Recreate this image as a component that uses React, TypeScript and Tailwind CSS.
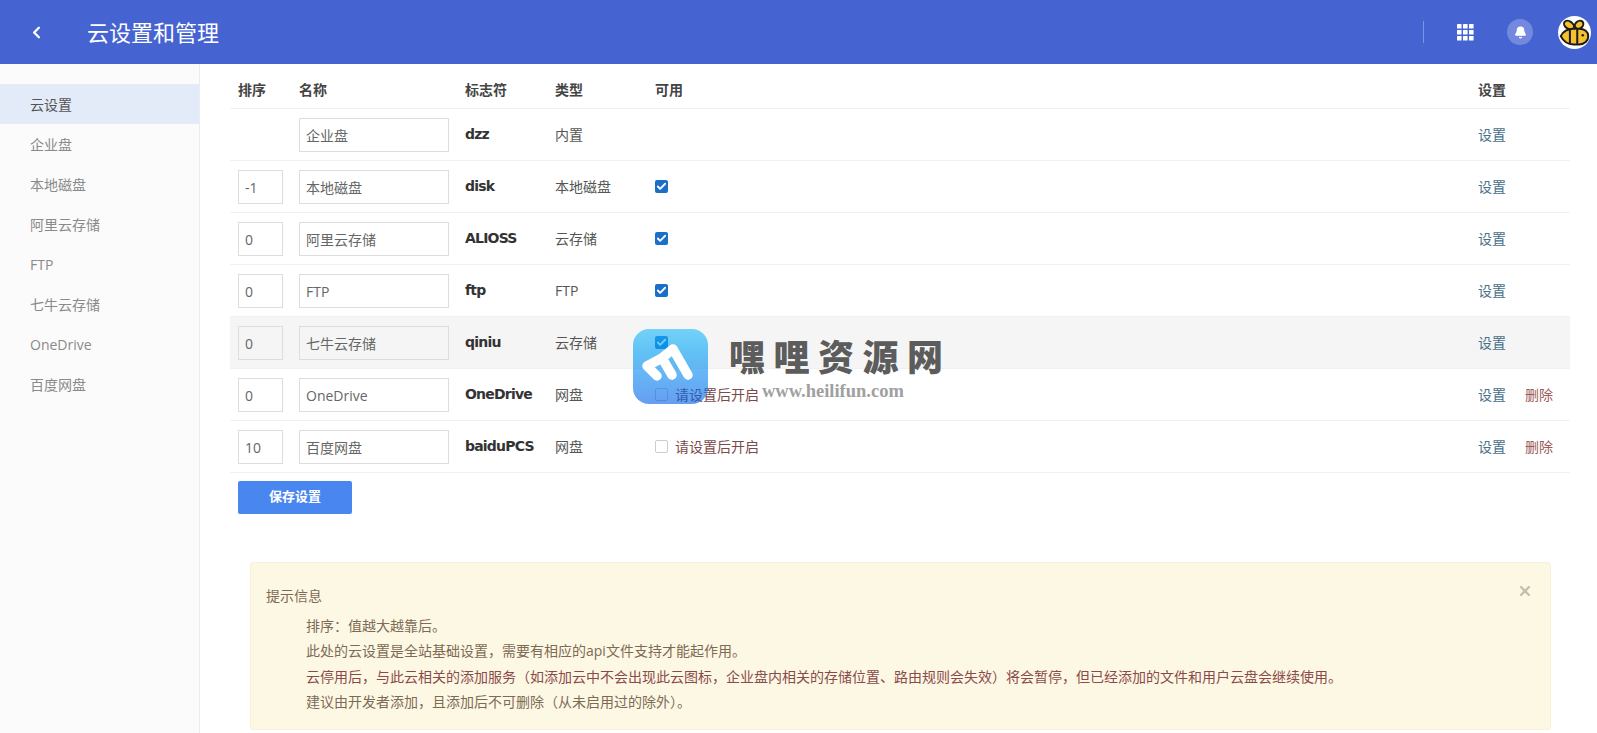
import { Check, ChevronLeft, Bell, X } from "lucide-react"

const menu = ["云设置", "企业盘", "本地磁盘", "阿里云存储", "FTP", "七牛云存储", "OneDrive", "百度网盘"]

type Row = {
  order?: string
  name: string
  id: string
  type: string
  enabled?: boolean
  needSetup?: boolean
  canDelete?: boolean
  hover?: boolean
}

const rows: Row[] = [
  { name: "企业盘", id: "dzz", type: "内置" },
  { order: "-1", name: "本地磁盘", id: "disk", type: "本地磁盘", enabled: true },
  { order: "0", name: "阿里云存储", id: "ALIOSS", type: "云存储", enabled: true },
  { order: "0", name: "FTP", id: "ftp", type: "FTP", enabled: true },
  { order: "0", name: "七牛云存储", id: "qiniu", type: "云存储", enabled: true, hover: true },
  { order: "0", name: "OneDrive", id: "OneDrive", type: "网盘", needSetup: true, canDelete: true },
  { order: "10", name: "百度网盘", id: "baiduPCS", type: "网盘", needSetup: true, canDelete: true },
]

const tips = [
  "排序：值越大越靠后。",
  "此处的云设置是全站基础设置，需要有相应的api文件支持才能起作用。",
  "云停用后，与此云相关的添加服务（如添加云中不会出现此云图标，企业盘内相关的存储位置、路由规则会失效）将会暂停，但已经添加的文件和用户云盘会继续使用。",
  "建议由开发者添加，且添加后不可删除（从未启用过的除外）。",
]

function BeeLogo() {
  return (
    <svg viewBox="0 0 36 36" className="w-[33px] h-[33px]">
      <circle cx="18" cy="18" r="18" fill="#fff" />
      <g stroke="#1c1c1c" strokeWidth="2.2" strokeLinejoin="round">
        <ellipse cx="12" cy="10" rx="6" ry="4" fill="#f5c02e" transform="rotate(35 12 10)" />
        <ellipse cx="23" cy="9.5" rx="5" ry="4" fill="#f5c02e" transform="rotate(-40 23 9.5)" />
        <path d="M3 22c3-6 8-8 14-8h6c6 0 10 3 10 8s-4 9-10 9h-6c-6 0-11-3-14-9z" fill="#f5c02e" />
        <path d="M13 15v15M21 14v17" fill="none" />
      </g>
      <circle cx="27" cy="21" r="1.4" fill="#1c1c1c" />
    </svg>
  )
}

function AppsIcon() {
  return (
    <svg viewBox="0 0 17 17" className="w-[17px] h-[17px]" fill="#fff">
      {[0, 6, 12].map((y) =>
        [0, 6, 12].map((x) => <rect key={`${x}-${y}`} x={x} y={y} width="4.6" height="4.6" rx="0.6" />)
      )}
    </svg>
  )
}

function Header() {
  return (
    <header className="h-16 bg-[#4564d1] flex items-center text-white">
      <ChevronLeft className="ml-[27px] w-[19px] h-[19px]" strokeWidth={3} />
      <h1 className="ml-[41px] text-[22px] font-normal">云设置和管理</h1>
      <div className="ml-auto h-[22px] border-l border-[#7d93e0]" />
      <div className="ml-[33px]">
        <AppsIcon />
      </div>
      <div className="ml-[33px] w-[26px] h-[26px] rounded-full bg-[#7389df] flex items-center justify-center">
        <Bell className="w-[13px] h-[13px]" fill="currentColor" />
      </div>
      <div className="ml-[25px] mr-[6px]">
        <BeeLogo />
      </div>
    </header>
  )
}

function Sidebar() {
  return (
    <aside className="w-[200px] shrink-0 bg-[#fbfbfb] border-r border-[#ececec] pt-5">
      {menu.map((item, i) => (
        <div
          key={item}
          className={`h-10 pl-[30px] flex items-center text-[14px] ${i === 0 ? "bg-[#e3ebf9] text-[#555]" : "text-[#8a8a8a]"}`}
        >
          {item}
        </div>
      ))}
    </aside>
  )
}

function RowItem({ row }: { row: Row }) {
  return (
    <tr className={`h-[52px] border-b border-[#f0f0f0] ${row.hover ? "bg-[#f5f5f5]" : ""}`}>
      <td className="pl-2 pt-[2px]">
        {row.order && (
          <input
            readOnly
            value={row.order}
            className={`block w-[45px] h-[34px] px-[6px] border border-[#ddd] text-[14px] text-[#666] outline-none ${row.hover ? "bg-[#f5f5f5]" : "bg-white"}`}
          />
        )}
      </td>
      <td className="pl-2 pt-[2px]">
        <input
          readOnly
          value={row.name}
          className={`block w-[150px] h-[34px] px-[6px] border border-[#ddd] text-[14px] text-[#666] outline-none ${row.hover ? "bg-[#f5f5f5]" : "bg-white"}`}
        />
      </td>
      <td className="pl-2 text-[14px] font-bold text-[#333] font-['DejaVu_Sans','Noto_Sans_CJK_SC',sans-serif] tracking-[-0.8px]">{row.id}</td>
      <td className="pl-2 text-[14px] text-[#555]">{row.type}</td>
      <td className="pl-2 text-[14px]">
        {row.enabled && (
          <span className="flex w-[13px] h-[13px] items-center justify-center rounded-[2px] bg-[#1a6fc9] text-white">
            <Check className="w-[11px] h-[11px]" strokeWidth={4} />
          </span>
        )}
        {row.needSetup && (
          <span className="flex items-center gap-[7px] text-[#7b4a4a]">
            <span className="w-[13px] h-[13px] rounded-[2px] border border-[#ccc] bg-white" />
            请设置后开启
          </span>
        )}
      </td>
      <td className="pl-2 text-[14px]">
        <a className="text-[#46708a]">设置</a>
        {row.canDelete && <a className="ml-[19px] text-[#9c5a5a]">删除</a>}
      </td>
    </tr>
  )
}

function Watermark() {
  return (
    <div className="absolute left-[633px] top-[329px] flex pointer-events-none">
      <div className="w-[75px] h-[75px] rounded-[16px] bg-gradient-to-b from-[#1bbbfa]/60 to-[#005ce6]/60">
        <svg viewBox="0 0 75 75" className="w-[75px] h-[75px]">
          <path d="M24 47 L14 37 L29 29 L39 46 M29 29 L40 20 L55 46" fill="none" stroke="#fff" strokeWidth="9.5" strokeLinecap="round" strokeLinejoin="round" />
        </svg>
      </div>
      <div className="ml-[21px] pt-[9px]">
        <div className="text-[36px] leading-[40px] font-black tracking-[8.5px] text-[#5c5c5c] whitespace-nowrap">嘿哩资源网</div>
        <div className="ml-[33px] mt-[4px] text-[18.5px] leading-[18px] font-bold text-[#a0a0a0] font-['Liberation_Serif',serif] whitespace-nowrap">www.heilifun.com</div>
      </div>
    </div>
  )
}

export default function App() {
  return (
    <div className="relative w-[1597px] h-[733px] overflow-hidden bg-white font-['Open_Sans','Noto_Sans_CJK_SC',sans-serif]">
      <Header />
      <div className="flex h-[669px]">
        <Sidebar />
        <main className="flex-1 pl-[30px] pr-[27px]">
          <table className="w-full table-fixed border-collapse">
            <colgroup>
              <col className="w-[61px]" />
              <col className="w-[166px]" />
              <col className="w-[90px]" />
              <col className="w-[100px]" />
              <col />
              <col className="w-[100px]" />
            </colgroup>
            <thead>
              <tr className="h-11 border-b border-[#f0f0f0] text-left text-[14px] text-[#444]">
                <th className="pl-2 pt-2 font-bold">排序</th>
                <th className="pl-2 pt-2 font-bold">名称</th>
                <th className="pl-2 pt-2 font-bold">标志符</th>
                <th className="pl-2 pt-2 font-bold">类型</th>
                <th className="pl-2 pt-2 font-bold">可用</th>
                <th className="pl-2 pt-2 font-bold">设置</th>
              </tr>
            </thead>
            <tbody>
              {rows.map((row) => (
                <RowItem key={row.id} row={row} />
              ))}
            </tbody>
          </table>
          <button className="ml-2 mt-2 w-[114px] h-[33px] rounded-[2px] bg-[#4a86f0] text-[13px] font-bold text-white">保存设置</button>
          <div className="relative ml-5 mr-[19px] mt-12 h-[168px] rounded-[3px] border border-[#f8f1d8] bg-[#fdf8e4] pl-[15px] pt-[23px] text-[14px] text-[#7d6a55]">
            <X className="absolute right-[17px] top-[20px] w-[16px] h-[16px] text-[#c4c0b0]" strokeWidth={3.5} />
            <div className="leading-[20px]">提示信息</div>
            <ul className="mt-[7px] pl-10">
              {tips.map((tip, i) => (
                <li key={tip} className={`leading-[25.5px] ${i === 2 ? "text-[#8a4a4a]" : ""}`}>
                  {tip}
                </li>
              ))}
            </ul>
          </div>
        </main>
      </div>
      <Watermark />
    </div>
  )
}
